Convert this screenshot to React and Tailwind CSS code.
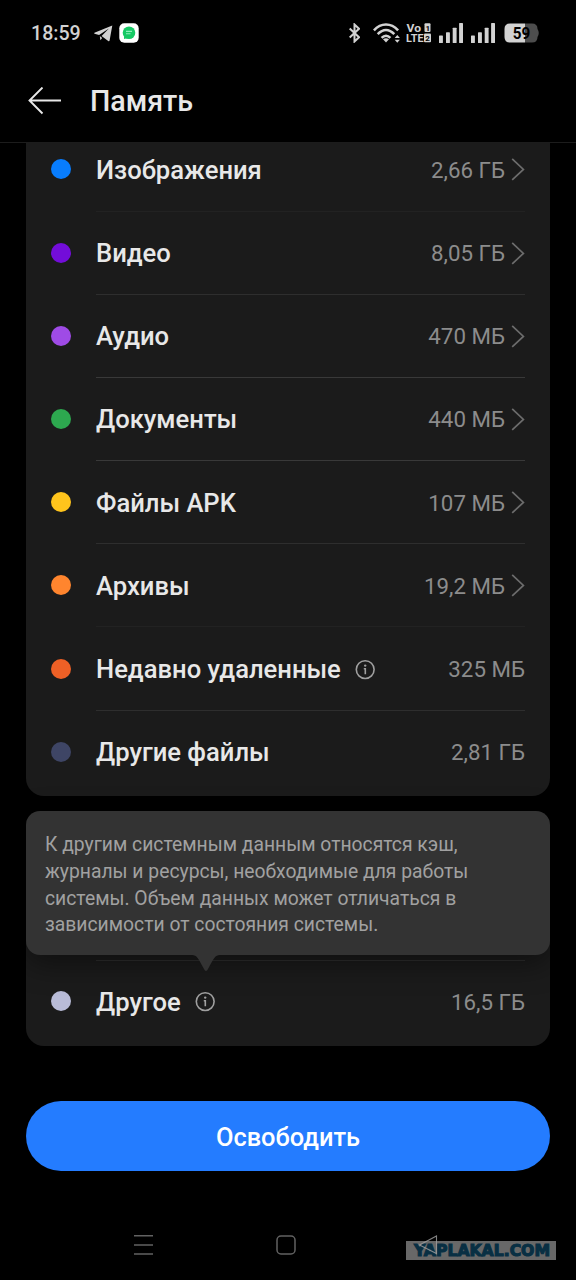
/**
 * Storage screen - category breakdown with system data hint
 */

import clsx from 'clsx';

const CATEGORIES = [
  { name: 'Изображения', size: '2,66 ГБ', dot: 'bg-[#087dfe]', line: 'bg-[#222222]', link: true },
  { name: 'Видео', size: '8,05 ГБ', dot: 'bg-[#730dd9]', line: 'bg-[#2e2e2e]', link: true },
  { name: 'Аудио', size: '470 МБ', dot: 'bg-[#9f4be6]', line: 'bg-[#393939]', link: true },
  { name: 'Документы', size: '440 МБ', dot: 'bg-[#2da84f]', line: 'bg-[#393939]', link: true },
  { name: 'Файлы APK', size: '107 МБ', dot: 'bg-[#ffc41c]', line: 'bg-[#2e2e2e]', link: true },
  { name: 'Архивы', size: '19,2 МБ', dot: 'bg-[#ff852e]', line: 'bg-[#222222]', link: true },
  { name: 'Недавно удаленные', size: '325 МБ', dot: 'bg-[#ee6026]', line: 'bg-[#2e2e2e]', info: true },
  { name: 'Другие файлы', size: '2,81 ГБ', dot: 'bg-[#3e4565]' },
];

const HINT_LINES = [
  'К другим системным данным относятся кэш,',
  'журналы и ресурсы, необходимые для работы',
  'системы. Объем данных может отличаться в',
  'зависимости от состояния системы.',
];

function InfoIcon() {
  return (
    <svg className="ml-[14.5px] size-5 overflow-visible text-[#a0a0a0]" viewBox="0 0 20 20" fill="none" stroke="currentColor">
      <circle cx="10.2" cy="10.6" r="8.9" strokeWidth="1.6" />
      <circle cx="10.2" cy="6.6" r="1.2" fill="currentColor" stroke="none" />
      <path d="M8.8 9.7H10.3V15.2" strokeWidth="1.6" />
    </svg>
  );
}

function Chevron() {
  return (
    <svg className="ml-[6px] h-6 w-[14px] text-[#6c6c6c]" viewBox="0 0 14 24" fill="none" stroke="currentColor" strokeWidth="1.7">
      <path d="M1.2 1.9L12.4 12.4L1.2 22.9" />
    </svg>
  );
}

function Signal() {
  return (
    <svg className="h-5 w-6" viewBox="0 0 24 20" fill="currentColor">
      <rect x="0" y="12.5" width="3.9" height="7.5" rx="0.6" />
      <rect x="7" y="9.3" width="3.9" height="10.7" rx="0.6" />
      <rect x="13.7" y="4.7" width="3.9" height="15.3" rx="0.6" />
      <rect x="20.1" y="0" width="3.9" height="20" rx="0.6" />
    </svg>
  );
}

function StatusBar() {
  return (
    <div className="flex h-[66px] items-center pr-[36.5px] pl-[31px] text-[#d2d2d2]">
      <span className="w-[50px] pt-px text-[19.6px] leading-none font-medium whitespace-nowrap">18:59</span>

      {/* Notifications */}
      <svg className="ml-[13px] h-[17px] w-[19px]" viewBox="0 0 19 17" fill="currentColor">
        <path d="M18.3 0.5L0.4 7.8C0 8.1 0.1 8.5 0.5 8.7L5.1 10L14.9 3.5L7.6 11.1L14.2 16.1C14.9 16.6 15.5 16.3 15.6 15.5Z" />
        <path d="M5.8 11L8.2 13L6.4 15.3Z" />
      </svg>
      <svg className="ml-[6px] size-5" viewBox="0 0 20 20">
        <rect x="0.3" y="0.3" width="19.4" height="19.4" rx="5" fill="#fff" />
        <circle cx="10" cy="9.8" r="6.3" fill="#16c964" />
        <path d="M5 13L5 16L9 15Z" fill="#16c964" />
        <path d="M7 8.4H13M7 10.8H11.5" stroke="#8df0b9" strokeWidth="1.1" />
      </svg>

      {/* Connectivity */}
      <div className="ml-auto flex items-center">
        <svg className="h-5 w-[11px]" viewBox="0 0 11 20" fill="none" stroke="currentColor" strokeWidth="2">
          <path d="M0.7 5.5L10 14.3L5.5 18.5V1.5L10 5.7L0.7 14.5" />
        </svg>
        <svg className="ml-[13px] h-5 w-[28px]" viewBox="0 0 28 20" fill="none" stroke="currentColor" strokeWidth="2.5">
          <path d="M0.9 7.3C8 -0.5 18 -0.5 25.1 7.3" />
          <path d="M4.7 11.2C10 5.6 16 5.6 21.3 11.2" />
          <path d="M8.6 14.8C11.4 11.9 14.6 11.9 17.4 14.8" />
          <path d="M10 16.3Q13 14 16 16.3L13 19.5Z" fill="currentColor" stroke="none" />
          <path d="M21.7 15L24.3 12L26.9 15ZM21.7 16.7L24.3 19.7L26.9 16.7Z" fill="currentColor" stroke="none" />
        </svg>
        <svg className="ml-[5px] h-5 w-[26px] overflow-visible font-['Roboto',sans-serif] font-bold" viewBox="0 0 26 20" fill="currentColor">
          <text x="0.5" y="8.8" fontSize="11.5" textLength="14.5" lengthAdjust="spacingAndGlyphs">Vo</text>
          <text x="0" y="19.3" fontSize="11.5" textLength="17.5" lengthAdjust="spacingAndGlyphs">LTE</text>
          <rect x="18.5" y="0.3" width="6" height="8.7" rx="1" />
          <rect x="18" y="10.6" width="7" height="8.7" rx="1" />
          <text x="19.6" y="7.5" fontSize="8" fill="#000">1</text>
          <text x="19.2" y="17.8" fontSize="8" fill="#000">2</text>
        </svg>
        <div className="ml-[7px] flex gap-2">
          <Signal />
          <Signal />
        </div>
        <svg className="ml-[9px] h-5 w-9 font-['Roboto',sans-serif] font-bold" viewBox="0 0 36 20">
          <path d="M6 0.5H28Q33.5 0.5 33.5 6Q36 10 33.5 14Q33.5 19.5 28 19.5H21V0.5Z" fill="#4d4d4d" />
          <path d="M6 0.5H21V19.5H6Q0.5 19.5 0.5 14V6Q0.5 0.5 6 0.5Z" fill="#d2d2d2" />
          <text x="8.7" y="15.7" fontSize="16" textLength="17.5" lengthAdjust="spacingAndGlyphs" fill="#000">59</text>
        </svg>
      </div>
    </div>
  );
}

function StorageRow({ name, size, dot, line, link, info }) {
  return (
    <div className="flex h-[83.2px] shrink-0 items-stretch pr-[25px] pl-[25px]">
      <span className={clsx('mr-[25px] mb-px size-5 shrink-0 self-center rounded-full', dot)} />
      <div className="flex flex-1 flex-col">
        <div className="flex flex-1 items-center">
          <span className="pt-px text-[25.6px] leading-8 font-medium whitespace-nowrap text-[#e8e8e8]">{name}</span>
          {info && <InfoIcon />}
          <span className="ml-auto pt-px text-[22.3px] leading-8 whitespace-nowrap text-[#8c8c8c]">{size}</span>
          {link && <Chevron />}
        </div>
        <div className={clsx('h-px', line)} />
      </div>
    </div>
  );
}

function SystemHint() {
  return (
    <div className="absolute inset-x-0 -top-px h-36 rounded-[14px] bg-[#333333] px-[19px] pt-[21px] shadow-[0_8px_30px_rgba(0,0,0,0.45)]">
      {HINT_LINES.map((text) => (
        <p key={text} className="text-[19.32px] leading-[26.8px] whitespace-nowrap text-[#a1a1a1]">
          {text}
        </p>
      ))}
      <svg className="absolute top-full left-[165.5px] h-4 w-7" viewBox="0 0 28 16" fill="#333333">
        <path d="M0 0C5 0 6 3 12 14Q14 18 16 14C22 3 23 0 28 0Z" />
      </svg>
    </div>
  );
}

function NavBar() {
  return (
    <div className="relative mt-[59px] flex h-[50px] items-start pt-1 pl-[133px] text-[#626262]">
      <svg className="h-[22px] w-5" viewBox="0 0 20 22" fill="none" stroke="currentColor" strokeWidth="1.5">
        <path d="M1 1.8H20M1 11H20M1 20H20" />
      </svg>
      <svg className="ml-[123px] h-[22px] w-5" viewBox="0 0 20 22" fill="none" stroke="currentColor" strokeWidth="1.5">
        <rect x="1" y="2" width="18" height="18" rx="4" />
      </svg>

      {/* Site stamp lies over the back button */}
      <svg
        className="absolute top-0 left-[406px] h-[34px] w-[150px] font-['DejaVu_Sans',sans-serif] font-bold"
        viewBox="0 0 150 34"
      >
        <rect x="0" y="11" width="150" height="19" fill="#686868" />
        <text x="8" y="26" fontSize="15" textLength="136" lengthAdjust="spacingAndGlyphs" fill="#082f43" stroke="#082f43" strokeWidth="1.1">
          YAPLAKAL.COM
        </text>
        <path d="M13.5 15L30.5 6V23.5Z" fill="none" stroke="#a0a0a0" strokeOpacity="0.8" strokeWidth="1.1" />
      </svg>
    </div>
  );
}

export default function App() {
  return (
    <div className="flex h-[1280px] w-[576px] flex-col overflow-hidden bg-black font-['Roboto',sans-serif]">
      <StatusBar />

      <header className="flex h-[76px] shrink-0 items-center pb-[7px] pl-7">
        <svg className="h-7 w-[34px] text-[#e8e8e8]" viewBox="0 0 34 28" fill="none" stroke="currentColor" strokeWidth="1.9">
          <path d="M14.5 0.5L1.5 13.5L14.5 26.5M1.5 13.5H33" />
        </svg>
        <h1 className="ml-7 pt-0.5 text-[28.6px] leading-none font-medium text-[#e8e8e8]">Память</h1>
      </header>

      <main className="border-t border-[#1c1c1c] px-[26px]">
        <section className="flex h-[653px] flex-col overflow-hidden rounded-b-[18px] bg-[#1b1b1b]">
          <div className="-mt-[14.7px]">
            {CATEGORIES.map((item) => (
              <StorageRow key={item.name} {...item} />
            ))}
          </div>
        </section>

        <section className="relative mt-4 flex h-[234px] flex-col rounded-[18px] bg-[#1b1b1b]">
          <div className="mt-[148px] mr-[25px] ml-[70px] h-px bg-[#2e2e2e]" />
          <div className="-mt-px">
            <StorageRow name="Другое" size="16,5 ГБ" dot="bg-[#b9bcd8]" info />
          </div>
          <SystemHint />
        </section>

        <button className="mt-[55px] h-[70px] w-full rounded-full bg-[#247cff] pt-0.5 text-[25.4px] font-medium text-white">
          Освободить
        </button>
      </main>

      <NavBar />
    </div>
  );
}
